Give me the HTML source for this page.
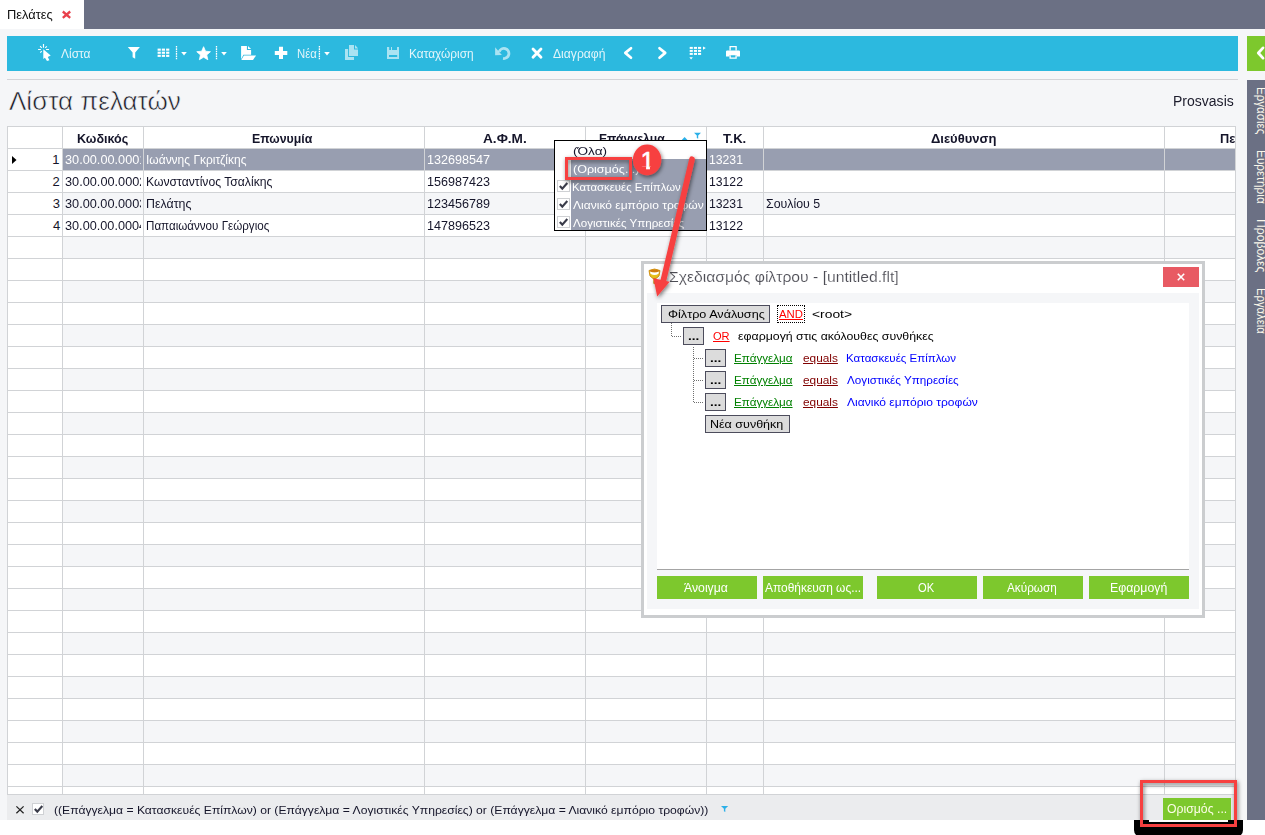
<!DOCTYPE html>
<html lang="el">
<head>
<meta charset="utf-8">
<title>Πελάτες</title>
<style>
*{box-sizing:border-box;margin:0;padding:0}
html,body{width:1265px;height:835px;overflow:hidden;background:#fff}
body{position:relative;font-family:"Liberation Sans","DejaVu Sans",sans-serif;font-size:13px;color:#15152a}
.abs{position:absolute}
svg{position:absolute;overflow:visible}
.t{position:absolute;line-height:20px;white-space:nowrap;transform-origin:0 0;color:#15152a}
.u{text-decoration:underline}
#app{position:absolute;left:0;top:0;width:1265px;height:820px;background:#f5f6f8;overflow:hidden}
#topbar{position:absolute;left:0;top:0;width:1265px;height:29px;background:#6b7084}
#tab{position:absolute;left:0;top:0;width:84px;height:29px;background:#fff}
#toolbar{position:absolute;left:7px;top:36px;width:1231px;height:35px;background:#2cb9df}
#greenbtn{position:absolute;left:1247px;top:36px;width:18px;height:35px;background:#7dc82d}
#sep{position:absolute;left:7px;top:79px;width:1231px;height:1px;background:#d3d4d8}
#side{position:absolute;left:1247px;top:80px;width:18px;height:740px;background:#6b7084;overflow:hidden}
#side .v{position:absolute;white-space:nowrap;color:#fbf7ea;line-height:20px;transform-origin:0 0}
#grid{position:absolute;left:7px;top:126px;width:1229px;height:668px;background:#fff;overflow:hidden}
#grid .stripes{position:absolute;left:56px;top:23px;width:1172px;height:645px;background:repeating-linear-gradient(to bottom,#f5f6f8 0,#f5f6f8 22px,#fff 22px,#fff 44px)}
#grid .sel{position:absolute;left:56px;top:23px;width:1172px;height:22px;background:#989eb0}
#grid .hl{position:absolute;left:0;top:0;width:1229px;height:668px;background:linear-gradient(#d1d3d6,#d1d3d6) 0 0/100% 1px no-repeat,repeating-linear-gradient(to bottom,#d1d3d6 0,#d1d3d6 1px,transparent 1px,transparent 22px) 0 22px/100% 100% no-repeat}
#grid .vl{position:absolute;top:0;width:1px;height:668px;background:#d1d3d6}
#fbar{position:absolute;left:7px;top:794px;width:1229px;height:26px;background:#ebecee;border-top:1px solid #d1d3d6}
.cb{position:absolute;background:#fff;border:1px solid #cfd1d4}
#obtn{position:absolute;left:1156px;top:3px;width:68px;height:23px;background:#7dc82d}
#popup{position:absolute;left:554px;top:140px;width:153px;height:91px;background:#fff;border:1px solid #000}
#popup .g{position:absolute;left:16px;top:18px;width:135px;height:71px;background:#989eb0}
#dlg{position:absolute;left:641px;top:261px;width:564px;height:357px;background:#fff;border:3px solid #cbcdcf}
#dlg .cls{position:absolute;left:519px;top:3px;width:36px;height:20px;background:#e85a63}
#dlg .pan{position:absolute;left:3px;top:29px;width:552px;height:316px;background:#f5f6f8}
#dlg .wh{position:absolute;left:13px;top:39px;width:532px;height:267px;background:#fff;border-bottom:1px solid #a4a4a4}
#dlg .gb{position:absolute;top:312px;width:100px;height:23px;background:#7dc82d}
#dlg .btn{position:absolute;height:18px;background:#dcdcdc;border:1px solid #4c4c5c}
</style>
</head>
<body>
<div id="app">

<div id="topbar"><div id="tab">
<span class="t" style="left:7.14px;top:4.84px;font-size:12px;transform:scaleX(1.0725);color:#111;">Πελάτες</span>
<svg style="left:61px;top:10px" width="11" height="9" viewBox="0 0 11 9"><path d="M1.8 1.5L9.2 7.8M9.2 1.5L1.8 7.8" stroke="#e8404c" stroke-width="2.3" fill="none"/></svg>
</div></div>
<div id="toolbar">
<span class="t" style="left:54.05px;top:7.64px;font-size:12px;transform:scaleX(0.9963);color:#e2f5fa;">Λίστα</span>
<span class="t" style="left:289.77px;top:7.64px;font-size:12px;transform:scaleX(0.9423);color:#e2f5fa;">Νέα</span>
<span class="t" style="left:401.52px;top:7.64px;font-size:12px;transform:scaleX(0.9926);color:#e2f5fa;">Καταχώριση</span>
<span class="t" style="left:545.85px;top:7.64px;font-size:12px;transform:scaleX(1.0114);color:#e2f5fa;">Διαγραφή</span>
<svg style="left:-7px;top:-36px" width="1265" height="80" viewBox="0 0 1265 80">
<path d="M43.3 49.2V59L44.9 57.7L47 61L49.4 60.2L47.8 57L50.7 55.5Z" fill="#fff"/>
<path d="M43.5 44.1V47.8M38.1 49.5H40.9M46.1 49.5H49M40.1 46.2L41.7 47.8M46.8 46.3L45.3 47.8M40.3 52.7L41.7 51.2" stroke="#fff" stroke-width="1.15" fill="none"/>
<path d="M127.8 47.1H139.9L135.2 52.6V58.8L132.6 57.2V52.6Z" fill="#fff"/>
<rect x="157.6" y="48.6" width="3.2" height="2.1" fill="#fff"/><rect x="161.8" y="48.6" width="3.2" height="2.1" fill="#fff"/><rect x="166.1" y="48.6" width="3.2" height="2.1" fill="#fff"/><rect x="157.6" y="51.7" width="3.2" height="2.1" fill="#fff"/><rect x="161.8" y="51.7" width="3.2" height="2.1" fill="#fff"/><rect x="166.1" y="51.7" width="3.2" height="2.1" fill="#fff"/><rect x="157.6" y="54.8" width="3.2" height="2.1" fill="#fff"/><rect x="161.8" y="54.8" width="3.2" height="2.1" fill="#fff"/><rect x="166.1" y="54.8" width="3.2" height="2.1" fill="#fff"/>
<path d="M176.5 46V60" stroke="#fff" stroke-width="1.3" stroke-dasharray="1.6 0.75" fill="none"/>
<path d="M181.2 52.1H186.8L184.0 55.6Z" fill="#fff"/>
<path d="M203.60 46.70L205.54 51.23L210.45 51.68L206.74 54.92L207.83 59.72L203.60 57.20L199.37 59.72L200.46 54.92L196.75 51.68L201.66 51.23Z" fill="#fff" stroke="#fff" stroke-width="0.8" stroke-linejoin="round"/>
<path d="M216.5 46V60" stroke="#fff" stroke-width="1.3" stroke-dasharray="1.6 0.75" fill="none"/>
<path d="M221.2 52.1H226.8L224.0 55.6Z" fill="#fff"/>
<path d="M241.1 46H246.9V49.9H251.1V54.7H243.4L241.1 59.3Z" fill="#fff"/><path d="M248 46L251.1 49V49H248Z" fill="#fff"/><path d="M243.9 55.4H256.1L253 60H241.3Z" fill="#fff"/>
<path d="M279 46.8H283V50.9H287.3V54.9H283V59H279V54.9H274.8V50.9H279Z" fill="#fff"/>
<path d="M319.4 46V60" stroke="#fff" stroke-width="1.3" stroke-dasharray="1.6 0.75" fill="none"/>
<path d="M324.2 52.1H329.8L327.0 55.6Z" fill="#fff"/>
<path d="M345 49H348.1V57H354V59.9H345Z" fill="rgba(255,255,255,0.6)"/><path d="M349 45.1H354V49.6H358V55.9H349Z" fill="rgba(255,255,255,0.6)"/><path d="M355 45.1L358 48.2V48.5H355Z" fill="rgba(255,255,255,0.6)"/>
<path d="M387 47H389.2V50.1H391V47H392V50.1H397V47H399V59H387ZM389 54.9V57H397.2V54.9Z" fill="rgba(255,255,255,0.6)" fill-rule="evenodd"/>
<path d="M499.2 51.8A5 5 0 1 1 503.03 58.42" stroke="rgba(255,255,255,0.6)" stroke-width="2.8" fill="none"/><path d="M495.1 47.3V55.2L501.9 54.9Z" fill="rgba(255,255,255,0.6)"/>
<path d="M533 49L541 57.2M541 49L533 57.2" stroke="#fff" stroke-width="2.8" stroke-linecap="round" fill="none"/>
<path d="M631 48.2L625.3 52.9L631 57.7" stroke="#fff" stroke-width="2.7" stroke-linecap="round" stroke-linejoin="round" fill="none"/>
<path d="M659.5 48.2L665.2 52.9L659.5 57.7" stroke="#fff" stroke-width="2.7" stroke-linecap="round" stroke-linejoin="round" fill="none"/>
<rect x="689.7" y="46.9" width="3.1" height="2" fill="#fff"/><rect x="693.9" y="46.9" width="3.1" height="2" fill="#fff"/><rect x="698.0" y="46.9" width="3.1" height="2" fill="#fff"/><rect x="689.7" y="49.9" width="3.1" height="2" fill="#fff"/><rect x="693.9" y="49.9" width="3.1" height="2" fill="#fff"/><rect x="698.0" y="49.9" width="3.1" height="2" fill="#fff"/><rect x="689.7" y="52.9" width="3.1" height="2" fill="#fff"/><rect x="693.9" y="52.9" width="3.1" height="2" fill="#fff"/><rect x="698.0" y="52.9" width="3.1" height="2" fill="#fff"/><path d="M703 46.4L705.8 48L703 49.7Z" fill="#fff"/><path d="M689.4 57.2H692.8L691.1 59.4Z" fill="#fff"/>
<path d="M730.1 50.5V46.7H736.1V50.5" stroke="#fff" stroke-width="1.3" fill="none"/><path d="M727.2 50.4H738.8Q740 50.4 740 51.6V56.6H736.8V55.3H729.4V56.6H726V51.6Q726 50.4 727.2 50.4Z" fill="#fff"/><path d="M730.1 55.3V58.2H736.1V55.3" stroke="#fff" stroke-width="1.3" fill="none"/>
</svg>
</div>
<div id="greenbtn"><svg style="left:0;top:0" width="18" height="35" viewBox="1247 36 18 35"><path d="M1263 47.9L1258.3 53L1263 58.1" stroke="#fff" stroke-width="2.8" fill="none" stroke-linecap="round" stroke-linejoin="round"/></svg></div>
<div id="sep"></div>
<div id="side">
<span class="v" style="left:23.80px;top:7.05px;font-size:13px;transform:rotate(90deg) scaleX(0.8915)">Εργασίες</span>
<span class="v" style="left:23.80px;top:69.73px;font-size:13px;transform:rotate(90deg) scaleX(0.9098)">Ευρετήρια</span>
<span class="v" style="left:23.80px;top:139.00px;font-size:13px;transform:rotate(90deg) scaleX(0.9357)">Προβολές</span>
<span class="v" style="left:23.80px;top:208.08px;font-size:13px;transform:rotate(90deg) scaleX(0.8666)">Εργαλεία</span>
</div>
<span class="t" style="left:9px;top:85.3px;font-size:26px;line-height:32px;color:#1c1c28;-webkit-text-stroke:0.55px #f5f6f8">Λίστα πελατών</span>
<span class="t" style="left:1173.45px;top:90.75px;font-size:14px;transform:scaleX(1.0011);color:#1c1c2c;">Prosvasis</span>
<div id="grid"><div class="stripes"></div><div class="sel"></div><div class="hl"></div>
<i class="vl" style="left:0px"></i>
<i class="vl" style="left:55px"></i>
<i class="vl" style="left:136px"></i>
<i class="vl" style="left:417px"></i>
<i class="vl" style="left:578px"></i>
<i class="vl" style="left:699px"></i>
<i class="vl" style="left:756px"></i>
<i class="vl" style="left:1157px"></i>
<i class="vl" style="left:1228px"></i>
<span class="t" style="left:69.67px;top:2.80px;font-size:13px;transform:scaleX(0.9666);color:#15152a;font-weight:bold;">Κωδικός</span>
<span class="t" style="left:245.39px;top:2.80px;font-size:13px;transform:scaleX(0.9488);color:#15152a;font-weight:bold;">Επωνυμία</span>
<span class="t" style="left:476.07px;top:2.80px;font-size:13px;transform:scaleX(1.0488);color:#15152a;font-weight:bold;">Α.Φ.Μ.</span>
<span class="t" style="left:591.60px;top:2.80px;font-size:13px;transform:scaleX(0.9367);color:#15152a;font-weight:bold;">Επάγγελμα</span>
<span class="t" style="left:716.16px;top:2.80px;font-size:13px;transform:scaleX(1.0051);color:#15152a;font-weight:bold;">Τ.Κ.</span>
<span class="t" style="left:923.98px;top:2.80px;font-size:13px;transform:scaleX(0.9996);color:#15152a;font-weight:bold;">Διεύθυνση</span>
<span class="t" style="left:1212.86px;top:2.80px;font-size:13px;transform:scaleX(0.9796);color:#15152a;font-weight:bold;">Πε</span>
<span class="t" style="left:45.21px;top:23.50px;font-size:13px;transform:scaleX(1.0000);color:#15152a;">1</span>
<span class="abs" style="left:56px;top:23px;width:77.5px;height:21px;overflow:hidden"><span class="t" style="left:1.82px;top:0.50px;font-size:13px;transform:scaleX(0.9791);color:#fff;">30.00.00.0001</span></span>
<span class="t" style="left:138.60px;top:23.50px;font-size:13px;transform:scaleX(0.9225);color:#fff;">Ιωάννης Γκριτζίκης</span>
<span class="t" style="left:419.74px;top:23.50px;font-size:13px;transform:scaleX(0.9696);color:#fff;">132698547</span>
<span class="t" style="left:702.17px;top:23.50px;font-size:13px;transform:scaleX(0.9380);color:#fff;">13231</span>
<span class="t" style="left:45.55px;top:45.50px;font-size:13px;transform:scaleX(1.0000);color:#15152a;">2</span>
<span class="abs" style="left:56px;top:45px;width:77.5px;height:21px;overflow:hidden"><span class="t" style="left:1.82px;top:0.50px;font-size:13px;transform:scaleX(0.9794);color:#15152a;">30.00.00.0002</span></span>
<span class="t" style="left:138.70px;top:45.50px;font-size:13px;transform:scaleX(0.9362);color:#15152a;">Κωνσταντίνος Τσαλίκης</span>
<span class="t" style="left:419.74px;top:45.50px;font-size:13px;transform:scaleX(0.9682);color:#15152a;">156987423</span>
<span class="t" style="left:702.17px;top:45.50px;font-size:13px;transform:scaleX(0.9387);color:#15152a;">13122</span>
<span class="t" style="left:45.71px;top:67.50px;font-size:13px;transform:scaleX(1.0000);color:#15152a;">3</span>
<span class="abs" style="left:56px;top:67px;width:77.5px;height:21px;overflow:hidden"><span class="t" style="left:1.82px;top:0.50px;font-size:13px;transform:scaleX(0.9783);color:#15152a;">30.00.00.0003</span></span>
<span class="t" style="left:138.68px;top:67.50px;font-size:13px;transform:scaleX(0.9529);color:#15152a;">Πελάτης</span>
<span class="t" style="left:419.74px;top:67.50px;font-size:13px;transform:scaleX(0.9690);color:#15152a;">123456789</span>
<span class="t" style="left:702.17px;top:67.50px;font-size:13px;transform:scaleX(0.9380);color:#15152a;">13231</span>
<span class="t" style="left:758.66px;top:67.50px;font-size:13px;transform:scaleX(0.9510);color:#15152a;">Σουλίου 5</span>
<span class="t" style="left:45.91px;top:89.50px;font-size:13px;transform:scaleX(1.0000);color:#15152a;">4</span>
<span class="abs" style="left:56px;top:89px;width:77.5px;height:21px;overflow:hidden"><span class="t" style="left:1.82px;top:0.50px;font-size:13px;transform:scaleX(0.9761);color:#15152a;">30.00.00.0004</span></span>
<span class="t" style="left:138.75px;top:89.50px;font-size:13px;transform:scaleX(0.8928);color:#15152a;">Παπαιωάννου Γεώργιος</span>
<span class="t" style="left:419.74px;top:89.50px;font-size:13px;transform:scaleX(0.9682);color:#15152a;">147896523</span>
<span class="t" style="left:702.17px;top:89.50px;font-size:13px;transform:scaleX(0.9387);color:#15152a;">13122</span>
<svg style="left:5px;top:30px" width="5" height="8" viewBox="0 0 5 8"><path d="M0 0L4.5 4L0 8Z" fill="#000"/></svg>
<svg style="left:0;top:0" width="1229" height="22" viewBox="7 126 1229 22"><path d="M681.3 140.5L684.6 137L687.9 140.5Z" fill="#2cb0e8"/><path d="M694 132.8H701L698.2 135.6V138.8L696.8 138V135.6Z" fill="#2cb0e8"/></svg>
</div>
<div id="popup"><div class="g"></div>
<span class="t" style="left:17.56px;top:-0.32px;font-size:11.6px;transform:scaleX(1.1741);color:#15152a;">(Όλα)</span>
<span class="t" style="left:17.62px;top:17.68px;font-size:11.6px;transform:scaleX(1.0826);color:#fff;">(Ορισμός...)</span>
<span class="t" style="left:17.46px;top:35.68px;font-size:11.6px;transform:scaleX(0.9836);color:#fff;">Κατασκευές Επίπλων</span>
<span class="t" style="left:18.35px;top:53.68px;font-size:11.6px;transform:scaleX(1.0388);color:#fff;">Λιανικό εμπόριο τροφών</span>
<span class="t" style="left:18.35px;top:71.68px;font-size:11.6px;transform:scaleX(1.0015);color:#fff;">Λογιστικές Υπηρεσίες</span>
<div class="cb" style="left:2px;top:39px;width:13px;height:12px"><svg style="left:0;top:0" width="11" height="10" viewBox="0 0 11 10"><path d="M1.8 5L4.3 7.6L9.3 2" stroke="#3a3c4a" stroke-width="2.1" fill="none"/></svg></div>
<div class="cb" style="left:2px;top:57px;width:13px;height:12px"><svg style="left:0;top:0" width="11" height="10" viewBox="0 0 11 10"><path d="M1.8 5L4.3 7.6L9.3 2" stroke="#3a3c4a" stroke-width="2.1" fill="none"/></svg></div>
<div class="cb" style="left:2px;top:75px;width:13px;height:12px"><svg style="left:0;top:0" width="11" height="10" viewBox="0 0 11 10"><path d="M1.8 5L4.3 7.6L9.3 2" stroke="#3a3c4a" stroke-width="2.1" fill="none"/></svg></div>
</div>
<div id="dlg">
<span class="t" style="left:24.88px;top:2.63px;font-size:15.5px;transform:scaleX(1.0135);color:#4c4c54;-webkit-text-stroke:0.18px #fff;">Σχεδιασμός φίλτρου - [untitled.flt]</span>
<div class="cls"><svg style="left:14px;top:6px" width="8" height="8" viewBox="0 0 8 8"><path d="M0.8 0.8L7.2 7.2M7.2 0.8L0.8 7.2" stroke="#fff" stroke-width="1.6" fill="none"/></svg></div>
<div class="pan"></div><div class="wh"></div>
<svg style="left:0;top:0" width="558" height="351" viewBox="644 264 558 351"><g stroke="#707070" stroke-width="1" stroke-dasharray="1 1" fill="none"><path d="M671.5 323V337"/><path d="M672 336.5H681"/><path d="M693.5 347V402.5"/><path d="M694 358.5H703"/><path d="M694 380.5H703"/><path d="M694 402.5H703"/></g>
</svg>
<div class="abs" style="left:133px;top:41px;width:28px;height:18px;border:1px dotted #000"></div>
<svg style="left:4px;top:3px" width="14" height="18" viewBox="648 267 14 18"><path d="M649 270.5Q654.5 267.5 660 270.5L659 276L656 278.5H653L650 276Z" fill="#e6c21c" stroke="#d08a0e" stroke-width="0.9"/><ellipse cx="654.5" cy="271" rx="4.7" ry="1.5" fill="#d07a10"/><path d="M650 271.6Q654.5 273.6 659 271.6L658.5 273.8Q654.5 276.2 650.5 273.8Z" fill="#fff"/><path d="M653.3 278.5H655.3V284.5L653.3 283.5Z" fill="#d08a0e"/></svg>
<div class="btn" style="left:17px;top:41px;width:109px;height:18px"></div>
<span class="t" style="left:23.68px;top:39.98px;font-size:11.6px;transform:scaleX(1.0882);color:#000;">Φίλτρο Ανάλυσης</span>
<span class="t u" style="left:135.38px;top:39.98px;font-size:11.6px;transform:scaleX(0.9783);color:#f00;">AND</span>
<span class="t" style="left:168.42px;top:39.98px;font-size:11.6px;transform:scaleX(1.1941);color:#000;">&lt;root&gt;</span>
<div class="btn" style="left:39px;top:63px;width:21px;height:18px"></div>
<span class="t" style="left:43.69px;top:62.38px;font-size:11.6px;transform:scaleX(1.1733);color:#000;font-weight:bold;">...</span>
<span class="t u" style="left:68.68px;top:62.38px;font-size:11.6px;transform:scaleX(0.9558);color:#f00;">OR</span>
<span class="t" style="left:93.58px;top:62.38px;font-size:11.6px;transform:scaleX(1.0644);color:#000;">εφαρμογή στις ακόλουθες συνθήκες</span>
<div class="btn" style="left:61px;top:85px;width:21px;height:18px"></div>
<span class="t" style="left:65.69px;top:84.38px;font-size:11.6px;transform:scaleX(1.1733);color:#000;font-weight:bold;">...</span>
<span class="t u" style="left:90.24px;top:84.38px;font-size:11.6px;transform:scaleX(1.0058);color:#008000;">Επάγγελμα</span>
<span class="t u" style="left:158.60px;top:84.38px;font-size:11.6px;transform:scaleX(1.0216);color:#800000;">equals</span>
<span class="t" style="left:202.25px;top:84.38px;font-size:11.6px;transform:scaleX(0.9955);color:#0000ff;">Κατασκευές Επίπλων</span>
<div class="btn" style="left:61px;top:107px;width:21px;height:18px"></div>
<span class="t" style="left:65.69px;top:106.38px;font-size:11.6px;transform:scaleX(1.1733);color:#000;font-weight:bold;">...</span>
<span class="t u" style="left:90.24px;top:106.38px;font-size:11.6px;transform:scaleX(1.0058);color:#008000;">Επάγγελμα</span>
<span class="t u" style="left:158.60px;top:106.38px;font-size:11.6px;transform:scaleX(1.0216);color:#800000;">equals</span>
<span class="t" style="left:203.15px;top:106.38px;font-size:11.6px;transform:scaleX(1.0078);color:#0000ff;">Λογιστικές Υπηρεσίες</span>
<div class="btn" style="left:61px;top:129px;width:21px;height:18px"></div>
<span class="t" style="left:65.69px;top:128.38px;font-size:11.6px;transform:scaleX(1.1733);color:#000;font-weight:bold;">...</span>
<span class="t u" style="left:90.24px;top:128.38px;font-size:11.6px;transform:scaleX(1.0058);color:#008000;">Επάγγελμα</span>
<span class="t u" style="left:158.60px;top:128.38px;font-size:11.6px;transform:scaleX(1.0216);color:#800000;">equals</span>
<span class="t" style="left:203.15px;top:128.38px;font-size:11.6px;transform:scaleX(1.0396);color:#0000ff;">Λιανικό εμπόριο τροφών</span>
<div class="btn" style="left:61px;top:151px;width:85px;height:18px"></div>
<span class="t" style="left:66.47px;top:150.18px;font-size:11.6px;transform:scaleX(1.0795);color:#000;">Νέα συνθήκη</span>
<div class="gb" style="left:13px"></div>
<span class="t" style="left:40.48px;top:313.84px;font-size:12px;transform:scaleX(1.0206);color:#fff;">Άνοιγμα</span>
<div class="gb" style="left:119px"></div>
<span class="t" style="left:120.98px;top:313.84px;font-size:12px;transform:scaleX(0.9948);color:#fff;">Αποθήκευση ως...</span>
<div class="gb" style="left:233px"></div>
<span class="t" style="left:273.97px;top:313.84px;font-size:12px;transform:scaleX(0.9313);color:#fff;">OK</span>
<div class="gb" style="left:339px"></div>
<span class="t" style="left:363.48px;top:313.84px;font-size:12px;transform:scaleX(0.9790);color:#fff;">Ακύρωση</span>
<div class="gb" style="left:445px"></div>
<span class="t" style="left:465.99px;top:313.84px;font-size:12px;transform:scaleX(1.0266);color:#fff;">Εφαρμογή</span>
</div>
<div id="fbar">
<svg style="left:8.5px;top:10.5px" width="8" height="8" viewBox="0 0 8 8"><path d="M0.4 0.4L7.6 7.2M7.6 0.4L0.4 7.2" stroke="#222" stroke-width="1.25" fill="none"/></svg>
<div class="cb" style="left:25px;top:8px;width:12px;height:12px"><svg style="left:0;top:0" width="11" height="10" viewBox="0 0 11 10"><path d="M1.8 5L4.3 7.6L9.3 2" stroke="#3a3c4a" stroke-width="2.1" fill="none"/></svg></div>
<span class="t" style="left:46.75px;top:4.51px;font-size:11.8px;transform:scaleX(1.0294);color:#15152a;">((Επάγγελμα = Κατασκευές Επίπλων) or (Επάγγελμα = Λογιστικές Υπηρεσίες) or (Επάγγελμα = Λιανικό εμπόριο τροφών))</span>
<svg style="left:714.3px;top:11.4px" width="8" height="7" viewBox="0 0 8 7"><path d="M0 0H7.2L4.3 2.8V6L2.9 5.2V2.8Z" fill="#2cb0e8"/></svg>
<div id="obtn"></div>
<span class="t" style="left:1160.12px;top:4.37px;font-size:12.5px;transform:scaleX(0.9803);color:#fdfde8;">Ορισμός ...</span>
</div>
</div>
<div class="abs" style="left:1134px;top:820px;width:109px;height:17px;background:#000;border-radius:0 0 7px 7px"></div>
<div class="abs" style="left:1149px;top:820px;width:79px;height:2px;background:#fff"></div>
<svg style="left:0;top:0" width="1265" height="835" viewBox="0 0 1265 835">
<defs><filter id="sh" x="-20%" y="-20%" width="140%" height="140%"><feDropShadow dx="1" dy="1.8" stdDeviation="2" flood-color="#000" flood-opacity="0.55"/></filter></defs>
<g filter="url(#sh)">
<rect x="566.5" y="158.5" width="64" height="20" fill="none" stroke="#f74141" stroke-width="3"/>
<rect x="1141.5" y="781.5" width="94" height="44" fill="none" stroke="#f74141" stroke-width="3"/>
<path d="M692 159.3L663.4 280.5" stroke="#f74141" stroke-width="5.8" stroke-linecap="round" fill="none"/>
<path d="M653.4 278.3L669.7 281.7L657.2 296.5Z" fill="#f74141"/>
<ellipse cx="647.1" cy="159.9" rx="14.2" ry="15.3" fill="#f74141"/>
</g>
<clipPath id="c1"><path d="M640 149H651V166.7H649.9V170H646.1V166.7H640Z"/></clipPath>
<text x="640.87" y="169.1" clip-path="url(#c1)" style="font-family:'Liberation Sans',sans-serif;font-size:24px" fill="#fff" stroke="#fff" stroke-width="0.7">1</text>
</svg>
</body>
</html>
